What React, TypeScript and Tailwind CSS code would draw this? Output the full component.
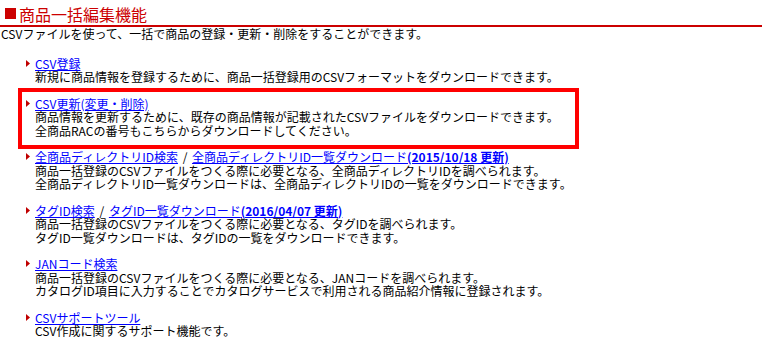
import React from "react";

type Item = {
  links: { label: string; date?: string }[];
  lines: string[];
  highlight?: boolean;
};

const items: Item[] = [
  {
    links: [{ label: "CSV登録" }],
    lines: ["新規に商品情報を登録するために、商品一括登録用のCSVフォーマットをダウンロードできます。"],
  },
  {
    links: [{ label: "CSV更新(変更・削除)" }],
    lines: [
      "商品情報を更新するために、既存の商品情報が記載されたCSVファイルをダウンロードできます。",
      "全商品RACの番号もこちらからダウンロードしてください。",
    ],
    highlight: true,
  },
  {
    links: [
      { label: "全商品ディレクトリID検索" },
      { label: "全商品ディレクトリID一覧ダウンロード", date: "(2015/10/18 更新)" },
    ],
    lines: [
      "商品一括登録のCSVファイルをつくる際に必要となる、全商品ディレクトリIDを調べられます。",
      "全商品ディレクトリID一覧ダウンロードは、全商品ディレクトリIDの一覧をダウンロードできます。",
    ],
  },
  {
    links: [{ label: "タグID検索" }, { label: "タグID一覧ダウンロード", date: "(2016/04/07 更新)" }],
    lines: [
      "商品一括登録のCSVファイルをつくる際に必要となる、タグIDを調べられます。",
      "タグID一覧ダウンロードは、タグIDの一覧をダウンロードできます。",
    ],
  },
  {
    links: [{ label: "JANコード検索" }],
    lines: [
      "商品一括登録のCSVファイルをつくる際に必要となる、JANコードを調べられます。",
      "カタログID項目に入力することでカタログサービスで利用される商品紹介情報に登録されます。",
    ],
  },
  {
    links: [{ label: "CSVサポートツール" }],
    lines: ["CSV作成に関するサポート機能です。"],
  },
];

function Arrow() {
  return (
    <svg width="4" height="7" viewBox="0 0 4 7" className="mt-[3px] mr-[5px] shrink-0">
      <polygon points="0,0 4,3.5 0,7" fill="#c00000" />
    </svg>
  );
}

export default function App() {
  return (
    <div
      className="w-[774px] h-[356px] bg-white text-black text-[12px] leading-[13.5px] overflow-hidden"
      style={{ fontFamily: '"Noto Sans CJK JP", "Noto Sans", sans-serif' }}
    >
      {/* heading */}
      <h1 className="w-[762px] h-[27px] flex items-center pt-[2px] border-b-2 border-[#cc0000] text-[16px] leading-[20px] font-normal text-[#cc0000]">
        <span className="inline-block w-[11px] h-[11px] bg-[#cc0000] ml-[5px] mr-[3px]" />
        商品一括編集機能
      </h1>
      <p className="pl-[1px]">CSVファイルを使って、一括で商品の登録・更新・削除をすることができます。</p>

      <ul className="mt-[16px] pl-[26px]">
        {items.map((item, i) => (
          <li key={i} className="relative flex items-start mb-[13px]">
            {item.highlight && (
              <div className="absolute -left-2 -top-[9px] w-[561px] h-[61px] border-4 border-[#ff0000] pointer-events-none" />
            )}
            <Arrow />
            <div>
              <div className="whitespace-nowrap">
                {item.links.map((l, j) => (
                  <React.Fragment key={j}>
                    {j > 0 && <span className="px-[2px]"> / </span>}
                    <a href="#" className="text-[#0000ff] underline underline-offset-[1px]">
                      {l.label}
                      {l.date && <span className="font-bold">{l.date}</span>}
                    </a>
                  </React.Fragment>
                ))}
              </div>
              {item.lines.map((line, k) => (
                <div key={k} className="whitespace-nowrap">
                  {line}
                </div>
              ))}
            </div>
          </li>
        ))}
      </ul>
    </div>
  );
}
